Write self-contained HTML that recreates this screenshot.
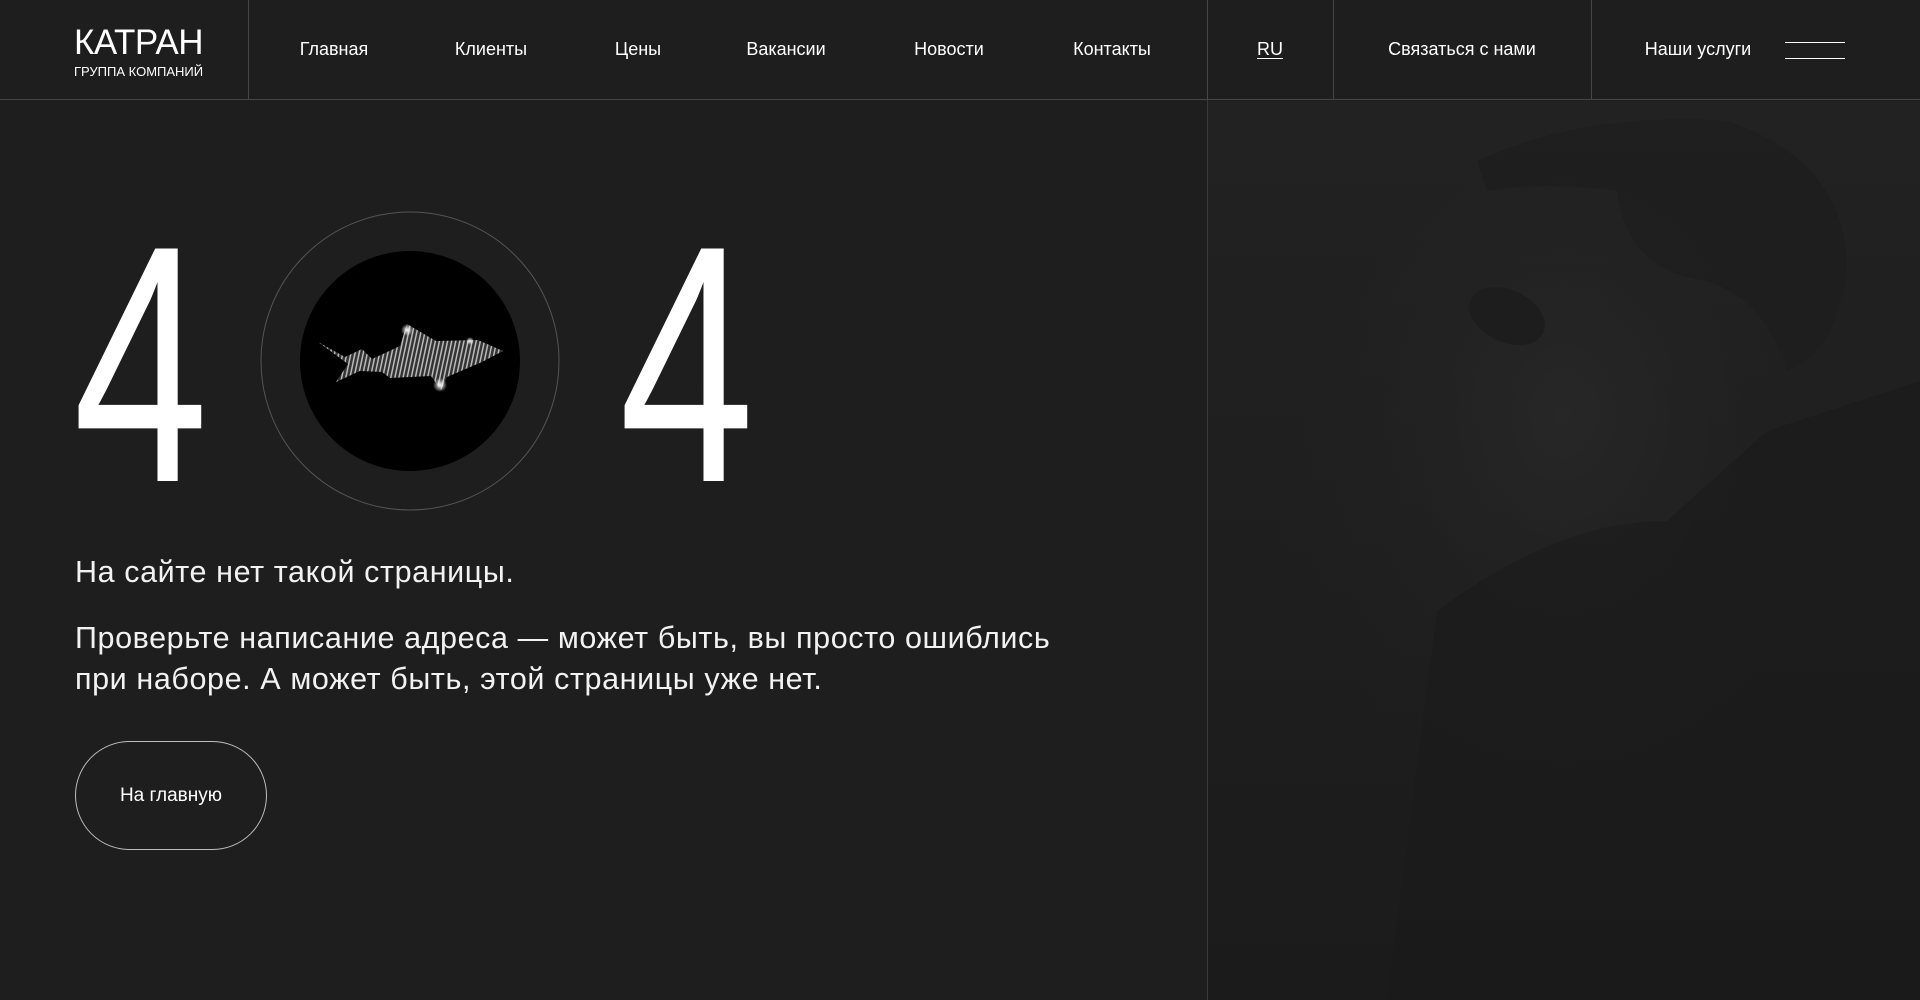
<!DOCTYPE html>
<html lang="ru"><head><meta charset="utf-8">
<style>
*{margin:0;padding:0;box-sizing:border-box}
body{width:1920px;height:1000px;background:#1e1e1e;color:#fff;font-family:"Liberation Sans","DejaVu Sans",sans-serif;overflow:hidden;position:relative}
.hdr{position:absolute;left:0;top:0;width:1920px;height:100px;border-bottom:1px solid #474747;background:#1e1e1e;z-index:2}
.v{position:absolute;top:0;width:1px;height:100px;background:#474747}
.logo{position:absolute;left:74px;top:26px}
.logo .t{font-size:35px;letter-spacing:-0.5px;line-height:33px;font-weight:400}
.logo .s{font-size:13px;margin-top:5px;letter-spacing:0}
.n{position:absolute;top:38px;font-size:18px;transform:translateX(-50%);white-space:nowrap;line-height:22px}
.ham{position:absolute;left:1785px;width:60px;height:1px;background:#fff}
.photo{position:absolute;left:1207px;top:101px;width:713px;height:899px;background:linear-gradient(180deg,#222 0%,#1f1f1f 40%,#1b1b1b 100%);overflow:hidden}
.four{position:absolute;top:195px;font-size:338px;line-height:338px;transform:scaleX(.72);transform-origin:left;font-weight:400}
.p{position:absolute;left:75px;font-size:30.5px;line-height:41px;color:#f2f2f2;letter-spacing:.6px;white-space:nowrap}
.btn{position:absolute;left:75px;top:741px;width:192px;height:109px;border:1px solid #bdbdbd;border-radius:55px;font-size:19px;display:flex;align-items:center;justify-content:center}
</style></head><body>
<div class="photo">
<svg width="713" height="899" viewBox="0 0 713 899">
<defs><radialGradient id="g" cx="0.5" cy="0.35" r="0.45"><stop offset="0" stop-color="#272727"/><stop offset="1" stop-color="#1f1f1f" stop-opacity="0"/></radialGradient></defs>
<rect width="713" height="899" fill="url(#g)"/>
<path d="M270 60 Q380 10 520 20 Q640 60 640 170 Q630 250 580 270 Q560 200 500 180 Q420 170 410 90 Q340 80 280 90Z" fill="#1c1c1c" opacity=".5"/>
<ellipse cx="300" cy="215" rx="40" ry="26" fill="#1d1d1d" transform="rotate(25 300 215)"/>
<path d="M230 510 Q350 420 460 420 L560 330 L713 280 L713 899 L180 899Z" fill="#1b1b1b" opacity=".6"/>
</svg>
</div>
<div class="hdr">
<div class="logo"><div class="t">КАТРАН</div><div class="s">ГРУППА КОМПАНИЙ</div></div>
<div class="v" style="left:248px"></div>
<div class="n" style="left:334px">Главная</div>
<div class="n" style="left:491px">Клиенты</div>
<div class="n" style="left:638px">Цены</div>
<div class="n" style="left:786px">Вакансии</div>
<div class="n" style="left:949px">Новости</div>
<div class="n" style="left:1112px">Контакты</div>
<div class="v" style="left:1207px"></div>
<div class="n" style="left:1270px;text-decoration:underline;text-underline-offset:3px">RU</div>
<div class="v" style="left:1333px"></div>
<div class="n" style="left:1462px">Связаться с нами</div>
<div class="v" style="left:1591px"></div>
<div class="n" style="left:1698px">Наши услуги</div>
<div class="ham" style="top:42px"></div>
<div class="ham" style="top:58px"></div>
</div>
<div class="v" style="left:1207px;top:100px;height:900px;background:#3a3a3a"></div>

<div class="four" style="left:73px">4</div>
<div class="four" style="left:619px">4</div>

<svg style="position:absolute;left:0;top:0" width="1207" height="1000">
<defs>
<pattern id="st" width="4" height="10" patternUnits="userSpaceOnUse" patternTransform="rotate(12)">
<rect width="4" height="10" fill="#3a3a3a"/><rect width="1.5" height="10" fill="#cfcfcf"/>
</pattern>
<radialGradient id="gl" cx=".5" cy=".5" r=".5"><stop offset="0" stop-color="#fff"/><stop offset="1" stop-color="#fff" stop-opacity="0"/></radialGradient>
</defs>
<circle cx="410" cy="361" r="149" fill="none" stroke="#555" stroke-width="1"/>
<circle cx="410" cy="361" r="110" fill="#000"/>
<path d="M318 342 L345 357 L362 349 L372 359 L400 346 L407 324 L436 341 L478 340 L503 351 L482 362 L447 377 L441 390 L431 376 L390 378 L382 372 L360 371 L336 382 L348 364 Z" fill="url(#st)" opacity=".9"/>
<circle cx="407" cy="330" r="6" fill="url(#gl)"/>
<circle cx="440" cy="385" r="7" fill="url(#gl)"/>
<circle cx="470" cy="341" r="4" fill="url(#gl)"/>
</svg>

<div class="p" style="top:552px">На сайте нет такой страницы.</div>
<div class="p" style="top:618px">Проверьте написание адреса — может быть, вы просто ошиблись<br>при наборе. А может быть, этой страницы уже нет.</div>
<div class="btn">На главную</div>
</body></html>
